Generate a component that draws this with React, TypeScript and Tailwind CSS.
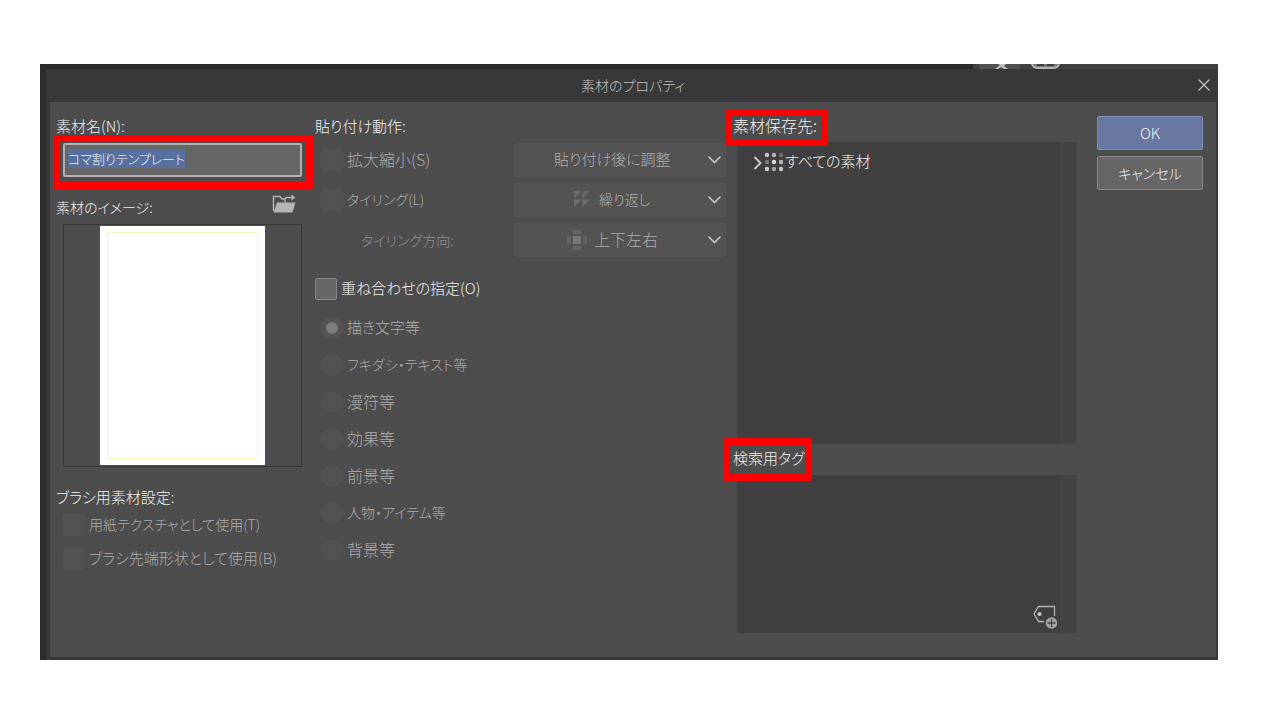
import { useEffect, useRef, useState } from "react";
import type { ReactNode } from "react";

const overlayTypes = [
  { label: "描き文字等", size: "text-[15px]" },
  { label: "フキダシ・テキスト等", size: "text-[14px]" },
  { label: "漫符等", size: "text-[16px]" },
  { label: "効果等", size: "text-[16px]" },
  { label: "前景等", size: "text-[16px]" },
  { label: "人物・アイテム等", size: "text-[14px]" },
  { label: "背景等", size: "text-[16px]" },
];

const Chevron = () => (
  <svg
    className="pointer-events-none absolute top-[11px] right-1 h-3 w-4"
    viewBox="0 0 16 12"
    fill="none"
    stroke="#c4c4c4"
    strokeWidth="1.6"
  >
    <path d="M2.5 2.5 L8.5 8.5 L14.5 2.5" />
  </svg>
);

const RepeatIcon = () => (
  <svg className="h-4 w-4" viewBox="0 0 16 16" fill="#6b6b6b">
    <path d="M0 0H7.5L0 7.5ZM8.5 0H16L8.5 7.5ZM0 8.5H7.5L0 16ZM8.5 8.5H16L8.5 16Z" />
  </svg>
);

const DirectionIcon = () => (
  <svg className="h-5 w-5" viewBox="0 0 20 20" fill="#646464">
    <rect x="6" y="6" width="8" height="8" fill="#787878" />
    <rect x="6" y="0" width="8" height="4" rx="1" />
    <rect x="6" y="16" width="8" height="4" rx="1" />
    <rect x="0" y="6" width="4" height="8" rx="1" />
    <rect x="16" y="6" width="4" height="8" rx="1" />
  </svg>
);

const FolderIcon = () => (
  <svg className="h-5 w-6" viewBox="0 0 24 20">
    <path
      d="M1.5 17V2.5H8L10 5H13M13 8.5V5.5Q13 3.5 15 3.5H21"
      fill="none"
      stroke="#b4b4b4"
      strokeWidth="1.4"
    />
    <path d="M19.5 0.5L23.5 3.5L19.5 6.5Z" fill="#b4b4b4" />
    <path d="M5 8.5H23.5L20.5 18.5H1.5Z" fill="#b4b4b4" />
  </svg>
);

const TagAddIcon = () => (
  <svg className="h-6 w-6" viewBox="0 0 24 24">
    <path
      d="M11 16.5H5.5L1 8.8L5.5 1.5H21.5V11"
      fill="none"
      stroke="#b0b0b0"
      strokeWidth="1.3"
    />
    <circle cx="6.5" cy="9" r="2.1" fill="#c8c8c8" />
    <circle cx="18.5" cy="18" r="5.8" fill="#a2a2a2" />
    <path d="M18.5 14V22M14.5 18H22.5" stroke="#444" strokeWidth="1.3" />
  </svg>
);

const DotsIcon = () => (
  <svg className="h-5 w-5" viewBox="0 0 20 20">
    {["#c0c0c0", "#b4b4b4", "#6e6e6e", "#7a7a7a", "#dedede", "#b8b8b8", "#d0d0d0", "#a8a8a8", "#c4c4c4"].map(
      (fill, i) => (
        <circle key={i} cx={4 + (i % 3) * 7} cy={3 + Math.floor(i / 3) * 7} r="2.2" fill={fill} />
      )
    )}
  </svg>
);

// Red frame drawn over the part of the dialog being explained
const Highlight = ({ className }: { className: string }) => (
  <div
    className={`pointer-events-none absolute rounded-xs border-7 border-[#fe0000] ${className}`}
  />
);

interface CheckProps {
  label: string;
  disabled?: boolean;
  className?: string;
}

const Check = ({ label, disabled, className = "" }: CheckProps) => (
  <label
    className={`flex items-center gap-1 ${disabled ? "text-[#acacac]" : "text-[#f0f0f0]"} ${className}`}
  >
    <input
      type="checkbox"
      disabled={disabled}
      className="h-[22px] w-[22px] shrink-0 appearance-none rounded-xs border border-[#868686] bg-[#666] checked:bg-[#6878a0] disabled:border-[#525252] disabled:bg-[#525252]"
    />
    <span className="pb-[2px]">{label}</span>
  </label>
);

interface PickerProps {
  label: string;
  value: string;
  className: string;
  icon?: ReactNode;
}

const Picker = ({ label, value, className, icon }: PickerProps) => (
  <div className="relative w-[212px] text-[#acacac]">
    <select
      aria-label={label}
      disabled
      className={`block h-[34px] w-full appearance-none rounded-xs bg-[#535353] pb-[2px] opacity-100 ${className}`}
    >
      <option>{value}</option>
    </select>
    {icon}
    <Chevron />
  </div>
);

const App = () => {
  const [name, setName] = useState("コマ割りテンプレート");
  const [overlay, setOverlay] = useState(overlayTypes[0].label);
  const nameRef = useRef<HTMLInputElement>(null);

  useEffect(() => {
    nameRef.current?.focus();
    nameRef.current?.select();
  }, []);

  return (
    <main className="min-h-screen bg-white pt-16 pr-[62px] pl-10 font-['Noto_Sans_CJK_JP',sans-serif] text-[15px] leading-5 font-light text-[#f0f0f0] [font-feature-settings:'palt']">
      <div className="bg-[#2c2c2c] pl-[6px]">
        <div className="flex h-[5px] justify-end overflow-hidden">
          <svg className="h-[5px] w-[245px]" viewBox="0 0 245 5">
            <rect width="245" height="5" fill="#404040" />
            <rect x="6" width="41" height="5" fill="#505050" />
            <path d="M25 0H33L31 2L35 5H31L28 3L25 5H22L27 1Z" fill="#c0c0c0" />
            <path d="M59 0Q60 4 65 4H80Q85 4 86 0" fill="#777" stroke="#b4b4b4" strokeWidth="2" />
            <path d="M64 1H71M74 1H81" stroke="#404040" strokeWidth="2" />
          </svg>
        </div>

        <section className="bg-[#383838] pr-[2px] pb-[3px] pl-1">
          <header className="relative flex h-[33px] items-center justify-center pb-px text-[14px] text-[#c0c0c0]">
            <h1>素材のプロパティ</h1>
            <button aria-label="閉じる" className="absolute right-[2px] flex h-5 w-5 items-center justify-center">
              <svg className="h-3 w-3" viewBox="0 0 12 12" stroke="#c0c0c0" strokeWidth="1.3">
                <path d="M0.5 0.5L11.5 11.5M11.5 0.5L0.5 11.5" />
              </svg>
            </button>
          </header>

          <form
            onSubmit={(e) => e.preventDefault()}
            className="grid grid-cols-[246px_minmax(0,411fr)_minmax(0,340fr)_114px] gap-x-3 bg-[#4d4d4d] pt-[13px] pr-[13px] pb-[24px] pl-[6px]"
          >
            <div className="pt-px">
              <label htmlFor="name" className="block">
                素材名(N):
              </label>
              <div className="relative mt-[7px] ml-[7px]">
                <input
                  id="name"
                  ref={nameRef}
                  value={name}
                  onChange={(e) => setName(e.target.value)}
                  className="block h-[34px] w-full rounded-xs border-2 border-[#b0b0b0] bg-[#666] px-[3px] pb-1 text-[13px] text-[#f0f0f0] outline-none selection:bg-[#5670a0] selection:text-[#f0f0f0]"
                />
                <Highlight className="-top-2 -right-[11px] -bottom-3 -left-[10px]" />
              </div>

              <div className="mt-[17px] flex h-6 items-center justify-between pr-[6px] text-[14px]">
                <span className="pt-[2px]">素材のイメージ:</span>
                <button type="button" aria-label="画像を開く" className="pb-1">
                  <FolderIcon />
                </button>
              </div>
              <div className="mt-[6px] ml-[7px] flex h-[243px] justify-center border border-[#383838] py-px">
                <div className="w-[165px] bg-white px-[7px] py-[6px]">
                  <div className="h-full border border-[#fff4c0]" />
                </div>
              </div>

              <h2 className="mt-5">ブラシ用素材設定:</h2>
              <Check disabled className="mt-[7px] ml-[7px] text-[14px]" label="用紙テクスチャとして使用(T)" />
              <Check disabled className="mt-3 ml-[7px] text-[15px]" label="ブラシ先端形状として使用(B)" />
            </div>

            <div className="pt-px pl-px">
              <h2>貼り付け動作:</h2>
              <div className="mt-[7px] -mr-px flex flex-col gap-[6px]">
                <div className="flex items-center justify-between">
                  <Check disabled className="ml-[6px] text-[16px]" label="拡大縮小(S)" />
                  <Picker label="拡大縮小" value="貼り付け後に調整" className="pl-10 text-[15px]" />
                </div>
                <div className="flex items-center justify-between">
                  <Check disabled className="ml-[6px] text-[14px]" label="タイリング(L)" />
                  <Picker
                    label="タイリング"
                    value="繰り返し"
                    className="pl-[85px] text-[14px]"
                    icon={<span className="absolute top-2 left-[60px]"><RepeatIcon /></span>}
                  />
                </div>
                <div className="flex items-center justify-between">
                  <span className="pl-[46px] text-[14px] text-[#909090]">タイリング方向:</span>
                  <Picker
                    label="タイリング方向"
                    value="上下左右"
                    className="pl-20 text-[16px]"
                    icon={<span className="absolute top-[7px] left-[53px]"><DirectionIcon /></span>}
                  />
                </div>
              </div>

              <Check className="mt-[21px]" label="重ね合わせの指定(O)" />
              <fieldset disabled className="mt-[9px] ml-[6px] text-[#acacac]">
                {overlayTypes.map(({ label, size }) => (
                  <label key={label} className={`flex h-[37px] items-center gap-1 ${size}`}>
                    <input
                      type="radio"
                      name="overlay"
                      checked={overlay === label}
                      onChange={() => setOverlay(label)}
                      className="h-[22px] w-[22px] appearance-none rounded-full border-[5px] border-[#525252] bg-[#525252] checked:bg-[#7c7c7c]"
                    />
                    <span className="pb-[2px]">{label}</span>
                  </label>
                ))}
              </fieldset>
            </div>

            <div>
              <div className="relative -ml-1 h-[27px] text-[16px]">
                <h2>素材保存先:</h2>
                <Highlight className="-top-[6px] -left-2 h-[37px] w-[103px]" />
              </div>
              <div className="flex h-[302px] bg-[#3f3f3f]">
                <button type="button" className="ml-4 flex h-10 flex-1 items-center">
                  <svg className="h-4 w-[10px]" viewBox="0 0 10 16" fill="none" stroke="#d0d0d0" strokeWidth="1.8">
                    <path d="M1.5 3L7.5 9L1.5 15" />
                  </svg>
                  <DotsIcon />
                  <span className="ml-[2px] pb-[2px]">すべての素材</span>
                </button>
                <div className="w-[17px] bg-[#434343]" />
              </div>
              <div className="relative -ml-1 h-[31px] pt-1">
                <h2>検索用タグ:</h2>
                <Highlight className="-top-[6px] -left-[10px] h-[43px] w-[89px]" />
              </div>
              <div className="flex h-[158px] bg-[#3f3f3f]">
                <div className="flex flex-1 items-end justify-end pr-[3px] pb-1">
                  <button type="button" aria-label="タグを追加">
                    <TagAddIcon />
                  </button>
                </div>
                <div className="w-[17px] bg-[#434343]" />
              </div>
            </div>

            <div className="flex flex-col gap-[6px] pt-px pl-2">
              <button type="submit" className="h-[34px] rounded-xs border border-[#8290b0] bg-[#6878a0]">
                OK
              </button>
              <button type="button" className="h-[34px] rounded-xs border border-[#868686] bg-[#666] text-[14px]">
                キャンセル
              </button>
            </div>
          </form>
        </section>
      </div>
    </main>
  );
};

export default App;
